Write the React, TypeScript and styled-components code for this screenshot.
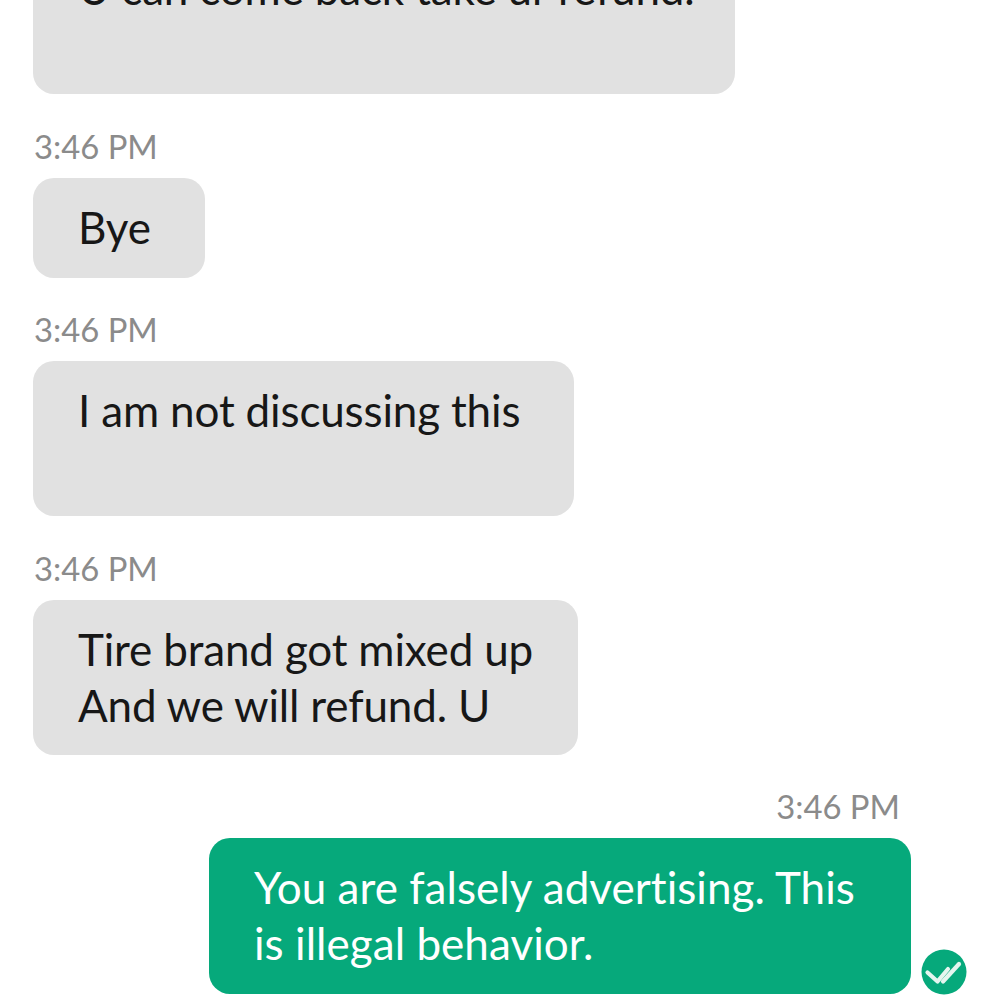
import React from "react";
import styled, { createGlobalStyle } from "styled-components";

const Global = createGlobalStyle`
  html, body { margin: 0; padding: 0; background: #fff; }
  body { width: 1000px; height: 1000px; overflow: hidden; }
`;

const Thread = styled.div`
  width: 1000px;
  box-sizing: border-box;
  font-family: Lato, "Open Sans", sans-serif;
  font-variant-ligatures: none;
  display: flex;
  flex-direction: column;
  gap: 32.6px;
  padding: 0 33px;
  margin-top: -61px;
`;

const Group = styled.div<{ $out?: boolean }>`
  display: flex;
  flex-direction: column;
  align-items: ${(p) => (p.$out ? "flex-end" : "flex-start")};
  ${(p) => (p.$out ? "margin-right: 56px;" : "")}
`;

const Time = styled.div<{ $out?: boolean }>`
  font-size: 32.8px;
  line-height: 40px;
  color: #8b8b8b;
  margin-bottom: 11px;
  margin-left: 1px;
  ${(p) => (p.$out ? "margin-right: 11px;" : "")}
`;

const Bubble = styled.div<{ $out?: boolean; $w: number; $h: number }>`
  position: relative;
  width: ${(p) => p.$w}px;
  height: ${(p) => p.$h}px;
  box-sizing: border-box;
  padding: 21px 0 0 45px;
  border-radius: 21px;
  background: ${(p) => (p.$out ? "#06a97b" : "#e1e1e1")};
  color: ${(p) => (p.$out ? "#ffffff" : "#171717")};
  font-size: 44px;
  line-height: 56px;
  letter-spacing: ${(p) => (p.$out ? "0.05px" : "-0.16px")};
  white-space: pre-line;
`;

const Receipt = styled.svg`
  position: absolute;
  right: -56px;
  bottom: -1px;
  width: 46px;
  height: 46px;
`;

export default function App() {
  return (
    <Thread>
      <Global />
      <Group>
        <Bubble $w={702} $h={155}>U can come back take ur refund.</Bubble>
      </Group>
      <Group>
        <Time>3:46 PM</Time>
        <Bubble $w={172} $h={100}>Bye</Bubble>
      </Group>
      <Group>
        <Time>3:46 PM</Time>
        <Bubble $w={541} $h={155}>I am not discussing this</Bubble>
      </Group>
      <Group>
        <Time>3:46 PM</Time>
        <Bubble $w={545} $h={155}>{"Tire brand got mixed up\nAnd we will refund. U"}</Bubble>
      </Group>
      <Group $out>
        <Time $out>3:46 PM</Time>
        <Bubble $out $w={702} $h={156}>
          {"You are falsely advertising. This\nis illegal behavior."}
          <Receipt viewBox="0 0 46 46">
            <circle cx="23" cy="23" r="22.5" fill="#06a97b" />
            <path d="M6.5 23.5l10 9 10.5-12.5" fill="none" stroke="#e4f5ef" strokeWidth="4.2" strokeLinecap="round" strokeLinejoin="round" />
            <path d="M22 32.5l16-17.5" fill="none" stroke="#e4f5ef" strokeWidth="4.2" strokeLinecap="round" />
          </Receipt>
        </Bubble>
      </Group>
    </Thread>
  );
}
